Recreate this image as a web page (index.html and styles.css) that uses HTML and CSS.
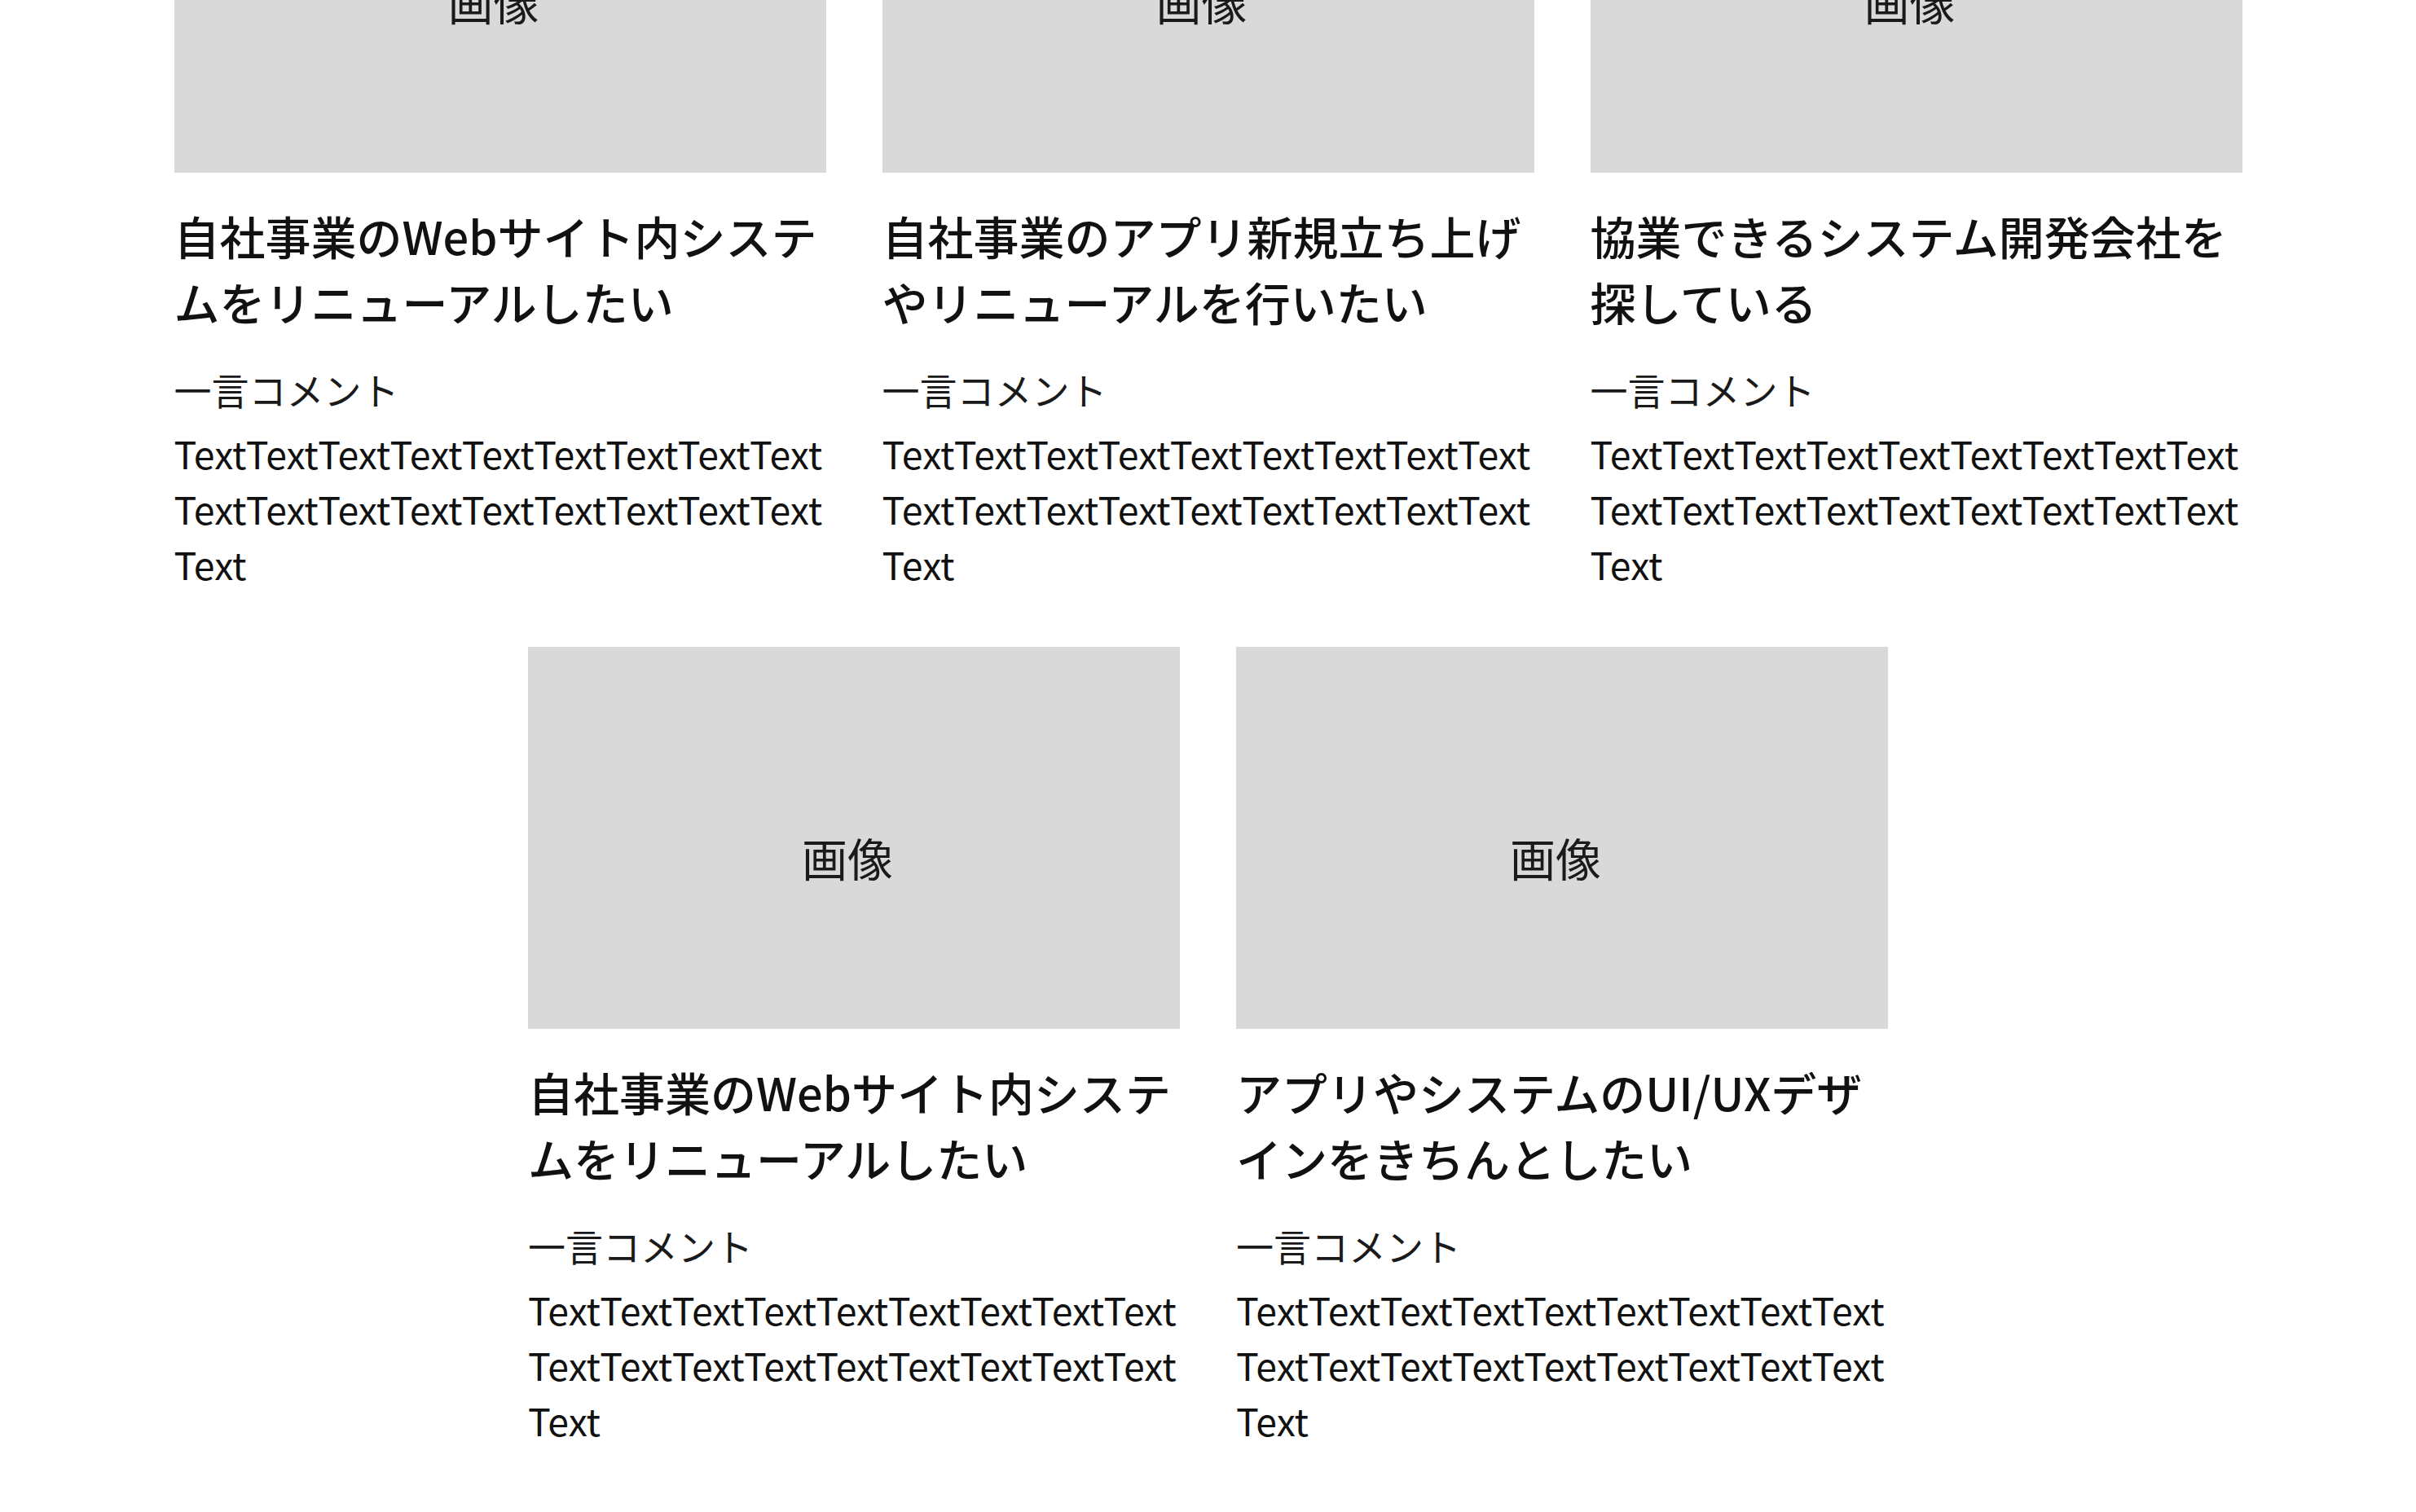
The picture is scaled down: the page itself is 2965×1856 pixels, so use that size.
FILE: index.html
```html
<!DOCTYPE html>
<html lang="ja">
<head>
<meta charset="utf-8">
<title>事例</title>
<link rel="stylesheet" href="styles.css">
</head>
<body>
<main class="cases">
  <ul class="case-list">
    <li class="case">
      <div class="case-thumb"><span class="case-thumb-label">画像</span></div>
      <h3 class="case-title">自社事業のWebサイト内システムをリニューアルしたい</h3>
      <p class="case-comment-label">一言コメント</p>
      <p class="case-comment">TextTextTextTextTextTextTextTextTextTextTextTextTextTextTextTextTextTextText</p>
    </li>
    <li class="case">
      <div class="case-thumb"><span class="case-thumb-label">画像</span></div>
      <h3 class="case-title">自社事業のアプリ新規立ち上げやリニューアルを行いたい</h3>
      <p class="case-comment-label">一言コメント</p>
      <p class="case-comment">TextTextTextTextTextTextTextTextTextTextTextTextTextTextTextTextTextTextText</p>
    </li>
    <li class="case">
      <div class="case-thumb"><span class="case-thumb-label">画像</span></div>
      <h3 class="case-title">協業できるシステム開発会社を探している</h3>
      <p class="case-comment-label">一言コメント</p>
      <p class="case-comment">TextTextTextTextTextTextTextTextTextTextTextTextTextTextTextTextTextTextText</p>
    </li>
    <li class="case">
      <div class="case-thumb"><span class="case-thumb-label">画像</span></div>
      <h3 class="case-title">自社事業のWebサイト内システムをリニューアルしたい</h3>
      <p class="case-comment-label">一言コメント</p>
      <p class="case-comment">TextTextTextTextTextTextTextTextTextTextTextTextTextTextTextTextTextTextText</p>
    </li>
    <li class="case">
      <div class="case-thumb"><span class="case-thumb-label">画像</span></div>
      <h3 class="case-title">アプリやシステムのUI/UXデザインをきちんとしたい</h3>
      <p class="case-comment-label">一言コメント</p>
      <p class="case-comment">TextTextTextTextTextTextTextTextTextTextTextTextTextTextTextTextTextTextText</p>
    </li>
  </ul>
</main>
</body>
</html>
```

FILE: styles.css
```css
* {
  box-sizing: border-box;
}

html, body {
  margin: 0;
  padding: 0;
  background: #ffffff;
}

body {
  font-family: "Noto Sans CJK JP", "Noto Sans", sans-serif;
  color: #000000;
}

.cases {
  display: flex;
  justify-content: center;
  margin-top: -257px;
}

.case-list {
  list-style: none;
  margin: 0;
  padding: 0;
  width: 2538px;
  display: flex;
  flex-wrap: wrap;
  justify-content: center;
  column-gap: 69px;
  row-gap: 68px;
}

.case {
  width: 800px;
  display: flex;
  flex-direction: column;
}

.case-thumb {
  height: 469px;
  background: #d9d9d9;
  display: flex;
  align-items: center;
  justify-content: center;
  padding-top: 46px;
  padding-right: 16px;
}

.case-thumb-label {
  font-size: 56px;
  line-height: 1.5;
  color: #1a1a1a;
}

.case-title {
  margin: 36px 0 0;
  font-size: 56px;
  line-height: 81px;
  font-weight: 500;
  color: #111111;
}

.case-comment-label {
  margin: 33px 0 0;
  font-size: 46px;
  line-height: 69px;
  font-weight: 400;
  color: #1a1a1a;
}

.case-comment {
  margin: 10px 0 0;
  font-size: 46.4px;
  line-height: 68px;
  font-weight: 400;
  color: #111111;
  word-break: break-all;
}
```
